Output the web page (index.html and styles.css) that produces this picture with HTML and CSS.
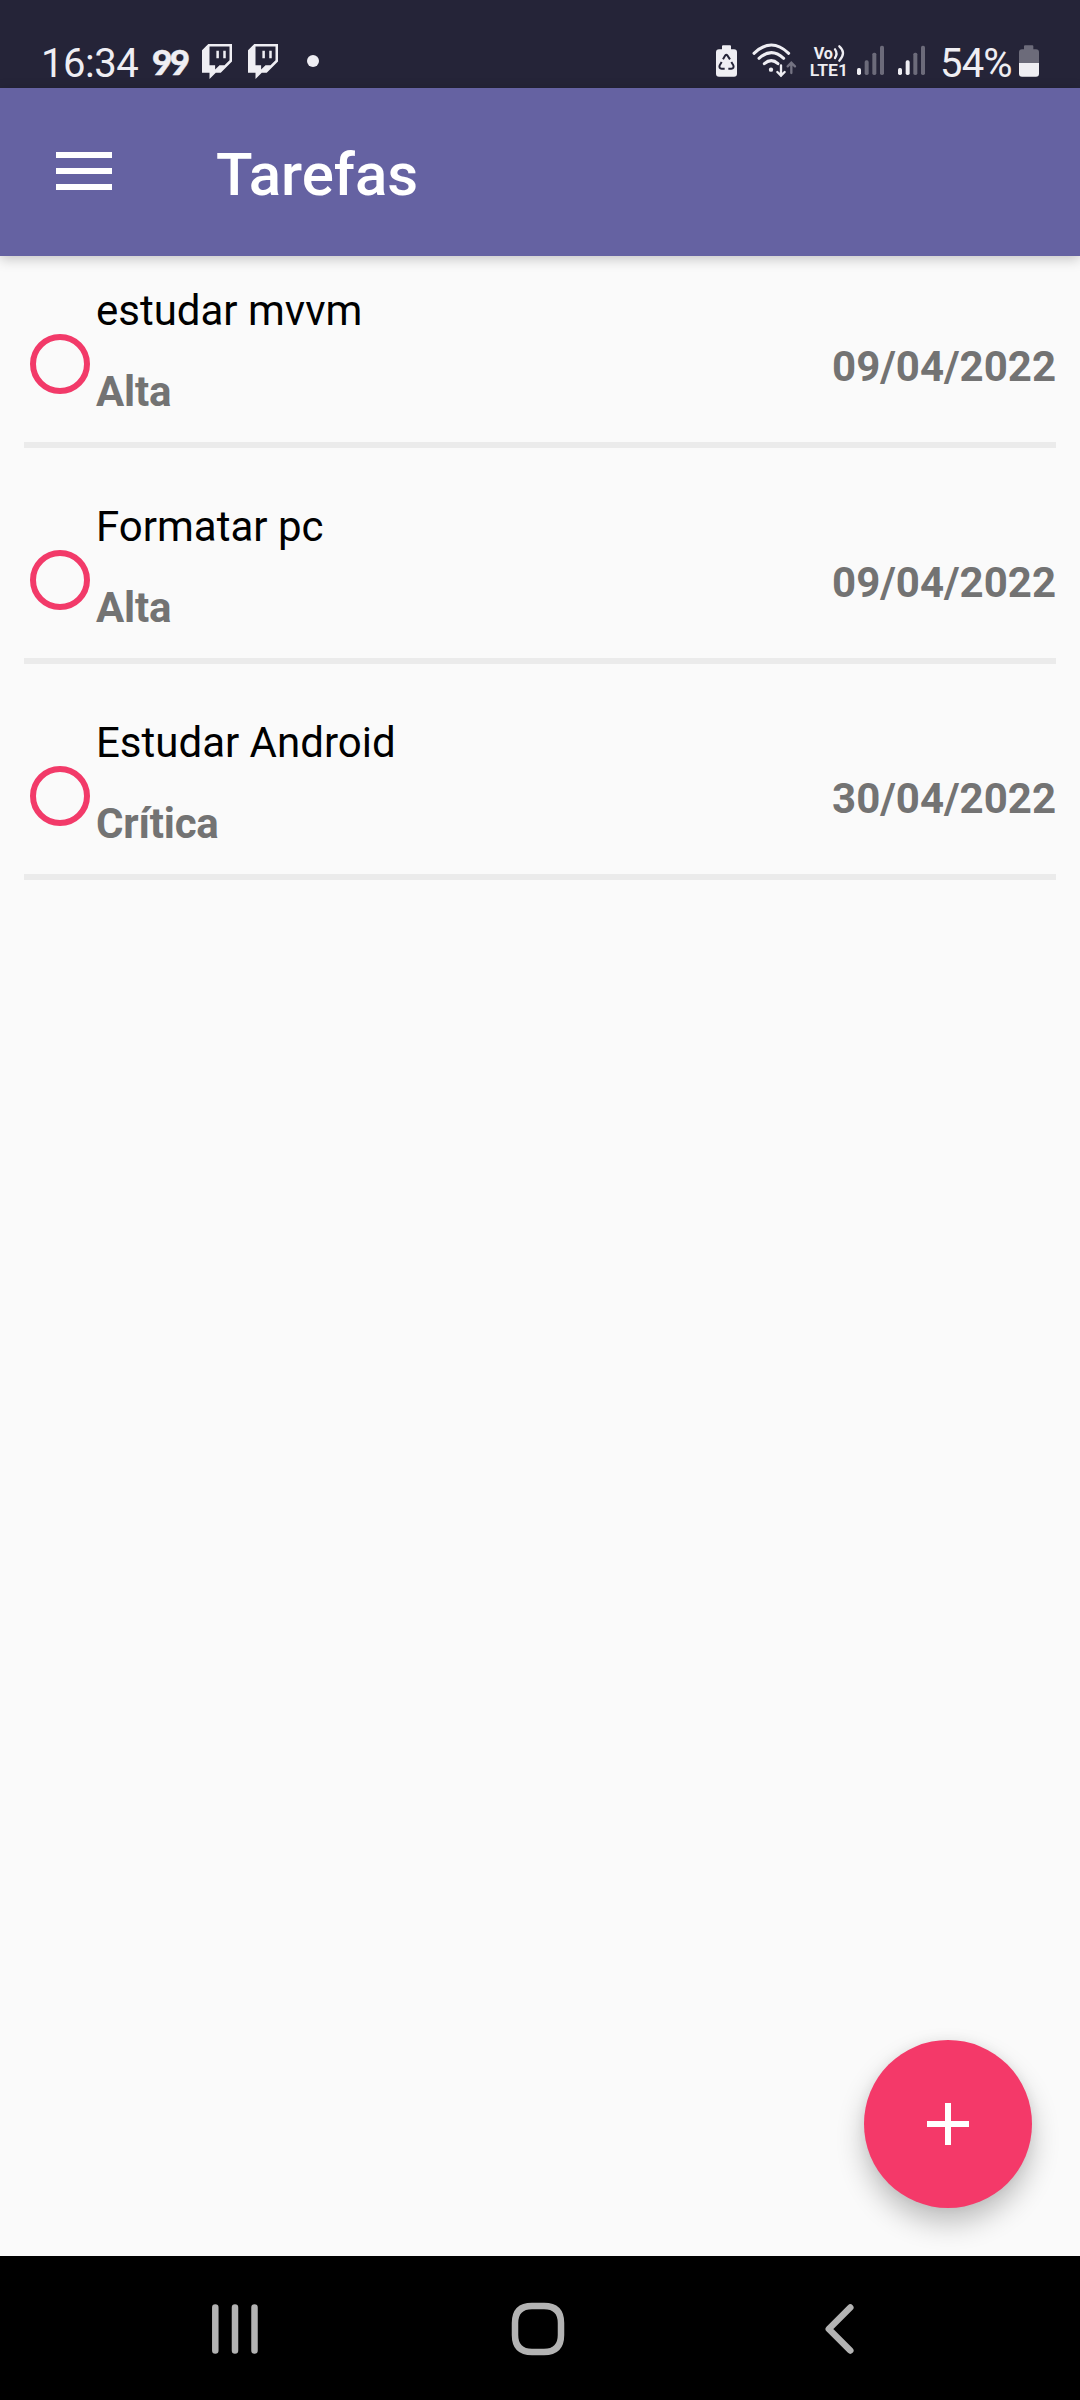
FILE: index.html
```html
<!DOCTYPE html>
<html lang="pt-BR">
<head>
<meta charset="utf-8">
<title>Tarefas</title>
<link rel="stylesheet" href="styles.css">
</head>
<body>
<div class="screen">
  <div class="status">
    <div class="status-left">
      <span class="clock">16:34</span>
      <span class="ninety">99</span>
      <svg class="twitch" viewBox="1.714 0 20.572 24"><path d="M11.571 4.714h1.715v5.143H11.57zm4.715 0H18v5.143h-1.714zM6 0L1.714 4.286v15.428h5.143V24l4.286-4.286h3.428L22.286 12V0zm14.571 11.143l-3.428 3.428h-3.429l-3 3v-3H6.857V1.714h13.714Z"/></svg>
      <svg class="twitch" viewBox="1.714 0 20.572 24"><path d="M11.571 4.714h1.715v5.143H11.57zm4.715 0H18v5.143h-1.714zM6 0L1.714 4.286v15.428h5.143V24l4.286-4.286h3.428L22.286 12V0zm14.571 11.143l-3.428 3.428h-3.429l-3 3v-3H6.857V1.714h13.714Z"/></svg>
      <span class="dot"></span>
    </div>
    <div class="status-right">
      <svg width="37" height="48" viewBox="45 60 111 144">
        <path d="M66 88V79q0-3 3-3h21q3 0 3 3v9h9q9 0 9 9v64q0 9-9 9H57q-9 0-9-9V97q0-9 9-9z"/>
        <g class="recycle"><path d="M69 118l7-12q3-4 6 0l8 12"/><path d="M94 126l6 10q3 10-6 10H85"/><path d="M65 126l-6 10q-3 10 6 10h9"/></g>
      </svg>
      <svg width="54" height="48" viewBox="156 60 162 144">
        <g class="wave"><path d="M162 100q52-50 104 0"/><path d="M177 115q37-34 74 0"/><path d="M193 131q21-18 41 0"/></g>
        <circle cx="213" cy="149" r="6.500"/>
        <path class="arrow" d="M243 136v31M232 156l11 11 11-11"/>
        <path class="arrow dim-line" d="M274 159v-31M263 139l11-11 11 11"/>
      </svg>
      <svg width="48" height="48" viewBox="318 60 144 144">
        <text class="volte" x="341" y="118" textLength="58" lengthAdjust="spacingAndGlyphs">Vo</text>
        <path class="sound" d="M405 88q9 12 0 26M418 79q22 19 0 43"/>
        <text class="volte lte" x="329" y="168" textLength="115" lengthAdjust="spacingAndGlyphs">LTE1</text>
      </svg>
      <svg width="41" height="48" viewBox="462 60 123 144">
        <rect x="471" y="144" width="12" height="21" rx="5"/>
        <g class="dim"><rect x="494" y="121" width="12" height="44" rx="5"/><rect x="517" y="98" width="12" height="67" rx="5"/><rect x="540" y="77" width="12" height="88" rx="5"/></g>
      </svg>
      <svg width="45" height="48" viewBox="585 60 135 144">
        <rect x="594" y="144" width="12" height="21" rx="5"/><rect x="617" y="121" width="12" height="44" rx="5"/>
        <g class="dim"><rect x="640" y="98" width="12" height="67" rx="5"/><rect x="663" y="77" width="12" height="88" rx="5"/></g>
      </svg>
      <span class="percent">54%</span>
      <svg width="23" height="48" viewBox="954 60 69 144">
        <path class="dim" d="M957 129V97q0-9 9-9h6v-9q0-3 3-3h22q3 0 3 3v9h8q9 0 9 9v32z"/>
        <path d="M957 129h60v32q0 9-9 9h-42q-9 0-9-9z"/>
      </svg>
    </div>
  </div>
  <header class="toolbar">
    <div class="menu"><i></i><i></i><i></i></div>
    <h1 class="title">Tarefas</h1>
  </header>
  <main class="tasks">
    <div class="task">
      <span class="ring"></span>
      <div class="info"><div class="name">estudar mvvm</div><div class="priority">Alta</div></div>
      <div class="date">09/04/2022</div>
    </div>
    <div class="task">
      <span class="ring"></span>
      <div class="info"><div class="name">Formatar pc</div><div class="priority">Alta</div></div>
      <div class="date">09/04/2022</div>
    </div>
    <div class="task">
      <span class="ring"></span>
      <div class="info"><div class="name">Estudar Android</div><div class="priority">Crítica</div></div>
      <div class="date">30/04/2022</div>
    </div>
    <div class="fab"><svg width="42" height="42" viewBox="0 0 42 42"><path d="M18 0h6v18h18v6H24v18h-6V24H0v-6h18z"/></svg></div>
  </main>
  <nav class="nav">
    <svg width="60" height="60" viewBox="0 0 60 60"><path class="recents" d="M10.300 8.500v43M30 8.500v43M49.500 8.500v43"/></svg>
    <svg width="60" height="60" viewBox="0 0 60 60"><path class="home" d="M24 7H36Q53 7 53 24V36Q53 53 36 53H24Q7 53 7 36V24Q7 7 24 7z"/></svg>
    <svg width="60" height="60" viewBox="0 0 60 60"><path class="back" d="M40.300 8.500L18.800 30l21.500 21.500"/></svg>
  </nav>
</div>
</body>
</html>
```
FILE: styles.css
```css
* { box-sizing: border-box; }
body { margin: 0; font-family: Roboto, "Liberation Sans", sans-serif; background: #fafafa; }
svg { display: block; flex: none; }
.screen { width: 1080px; height: 2400px; display: flex; flex-direction: column; overflow: hidden; }

.status { height: 88px; flex: none; padding: 40px 39px 0 41px; background: #252438; color: #efeef3; fill: #efeef3; display: flex; justify-content: space-between; }
.status-left, .status-right { display: flex; height: 48px; }
.clock, .percent { font-size: 40px; line-height: 48px; letter-spacing: -0.5px; white-space: nowrap; }
.clock { width: 111px; }
.percent { width: 78px; letter-spacing: -0.8px; }
.ninety { width: 50px; font: 900 35px/42px Lato, sans-serif; letter-spacing: -2.500px; -webkit-text-stroke: 0.5px #efeef3; }
.twitch { width: 30px; height: 35px; margin: 4px 16px 0 0; }
.dot { width: 12px; height: 12px; margin: 15px 0 0 13px; border-radius: 50%; background: #efeef3; }
.recycle path { fill: none; stroke: #252438; stroke-width: 6; }
.wave path, .arrow, .sound { fill: none; stroke: #efeef3; stroke-width: 9; stroke-linecap: round; }
.arrow, .sound { stroke-width: 7; }
.arrow.dim-line { stroke: #747382; }
.dim { fill: #6c6b7a; }
.volte { font-size: 49px; font-weight: 700; }
.volte.lte { font-size: 50px; font-weight: 600; }

.toolbar { height: 168px; flex: none; padding-left: 56px; background: #6562a2; color: #fff; display: flex; position: relative; z-index: 1; box-shadow: 0 3px 12px rgba(0, 0, 0, 0.22); }
.menu { width: 56px; margin: 64px 104px 0 0; display: flex; flex-direction: column; gap: 10px; }
.menu i { height: 6px; background: #fff; }
.title { margin: 52px 0 0; font-size: 60px; line-height: 70px; font-weight: 500; }

.tasks { flex: 1; position: relative; background: #fafafa; }
.task { height: 192px; margin: 0 24px 24px; border-bottom: 6px solid #ebebeb; display: flex; }
.ring { width: 60px; height: 60px; margin: 78px 6px 0; border: 6px solid #f23a69; border-radius: 50%; }
.info { flex: 1; padding-top: 30px; font-size: 42px; line-height: 49px; }
.name { color: #000; }
.priority { margin-top: 32px; font-weight: 700; color: #737373; letter-spacing: -0.2px; }
.date { padding-top: 86px; font-size: 42px; line-height: 49px; font-weight: 700; color: #737373; }

.fab { position: absolute; right: 48px; bottom: 48px; width: 168px; height: 168px; border-radius: 50%; background: #f43969; fill: #fff; display: flex; align-items: center; justify-content: center; box-shadow: 0 15px 28px rgba(0, 0, 0, 0.24), 0 0 12px rgba(0, 0, 0, 0.06); }

.nav { height: 144px; flex: none; padding: 43px 210px 0 205px; background: #000; display: flex; justify-content: space-between; }
.recents, .home, .back { fill: none; stroke: #b3b3b3; stroke-width: 6.500; stroke-linecap: round; stroke-linejoin: round; }
```
